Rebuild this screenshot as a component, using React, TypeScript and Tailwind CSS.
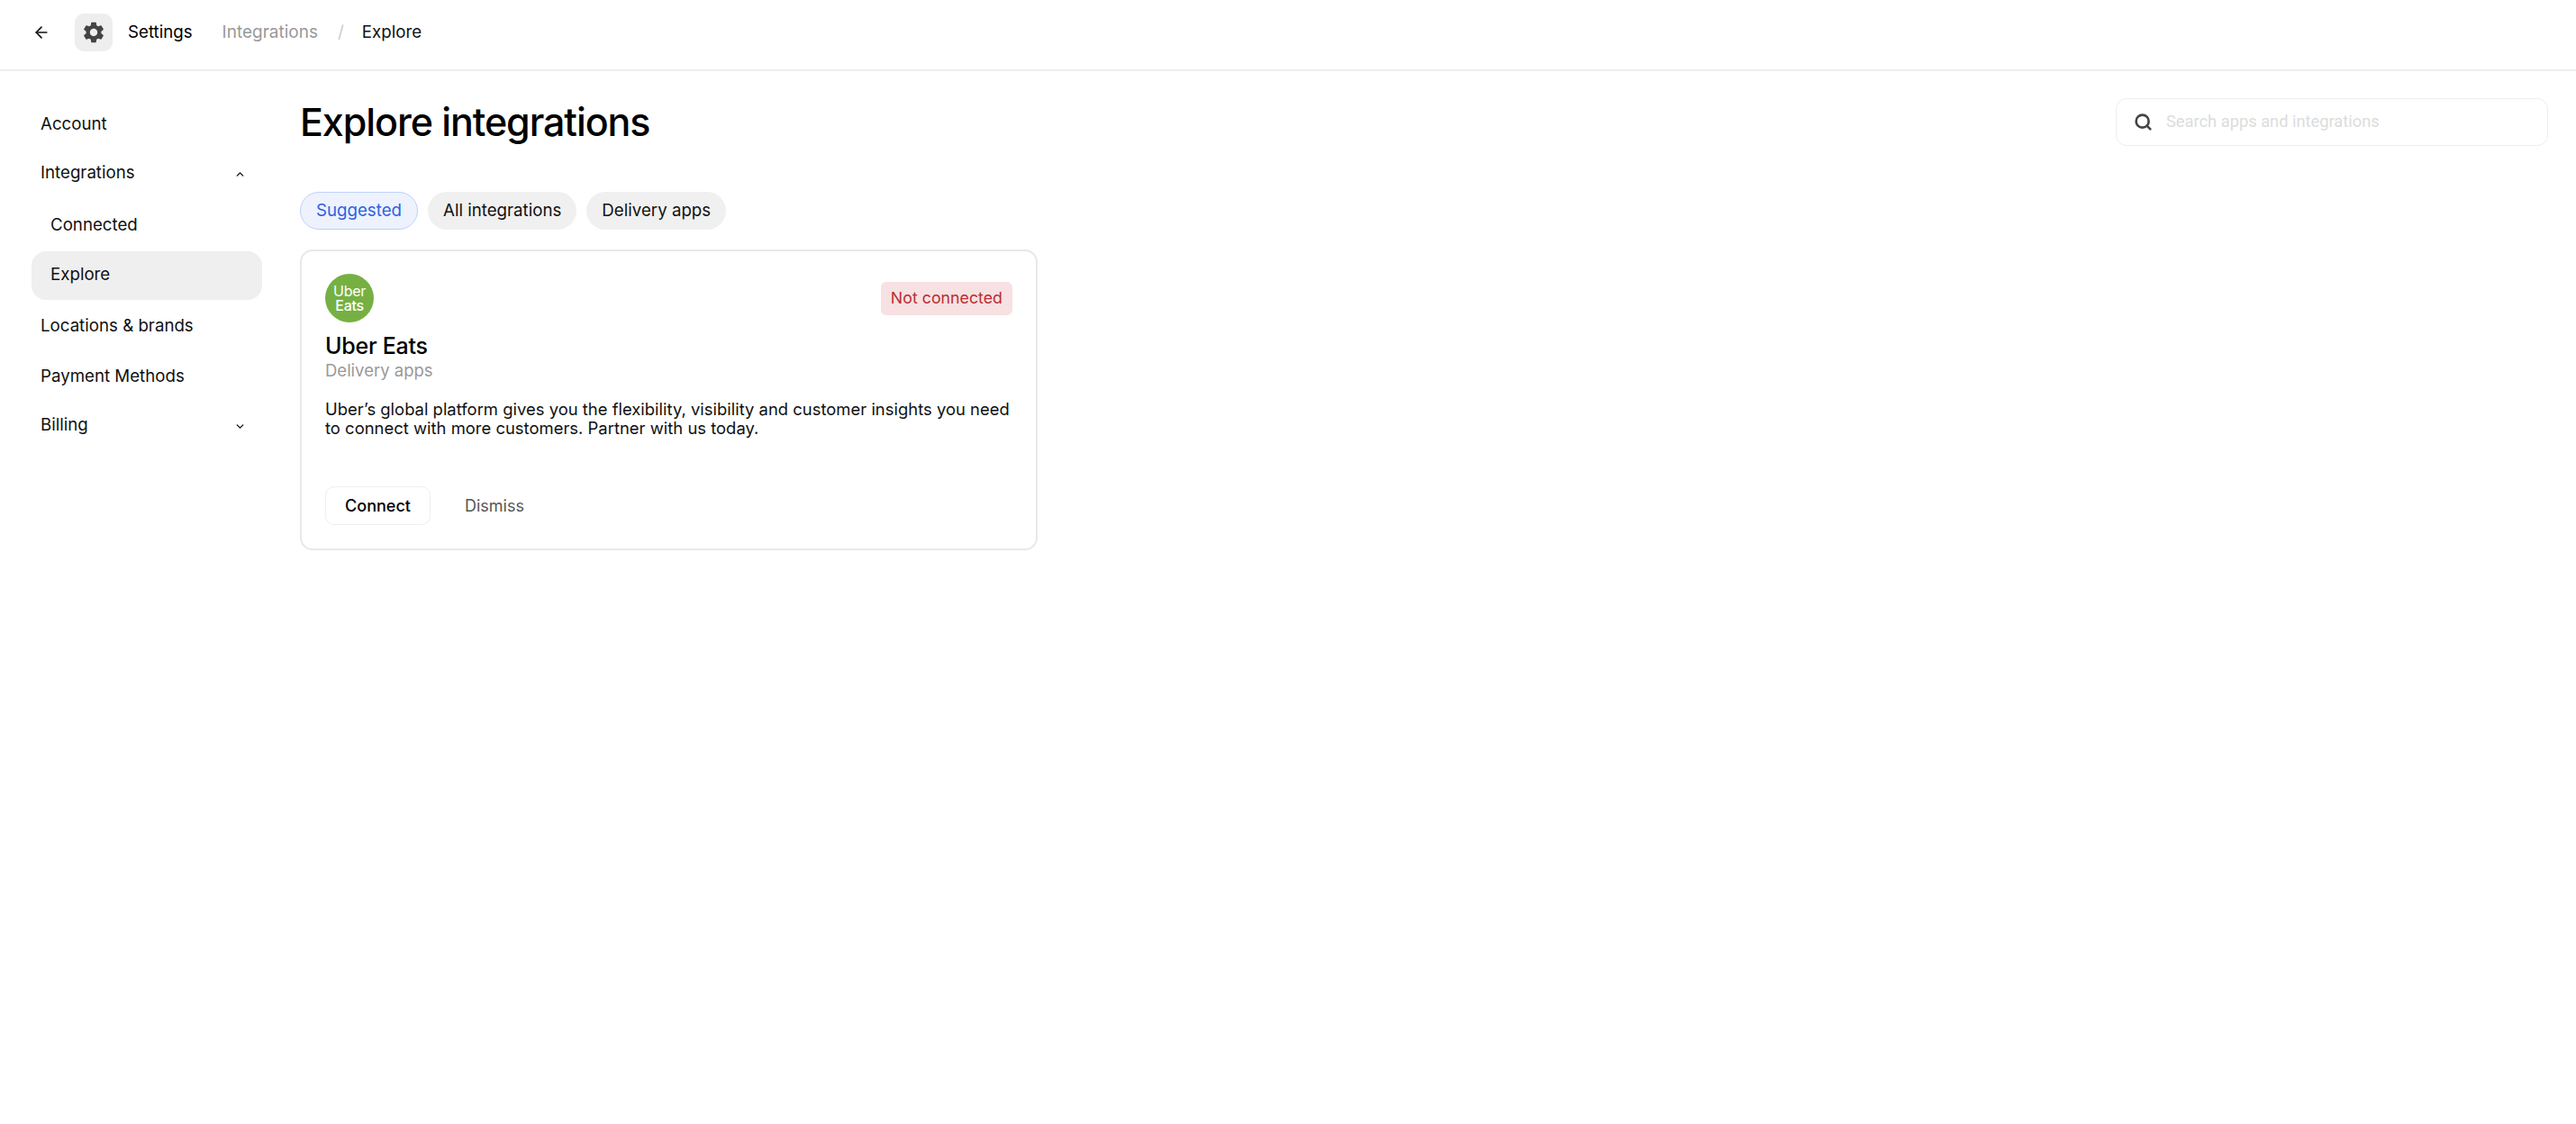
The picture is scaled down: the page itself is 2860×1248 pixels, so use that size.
import { ArrowLeft, ChevronDown, ChevronUp, Search } from 'lucide-react';
import { MdSettings } from 'react-icons/md';

const font = { fontFamily: 'Inter, sans-serif' };

const App = () => {
  return (
    <div className="min-h-[1248px] bg-white text-black" style={font}>
      {/* Top bar */}
      <header className="h-[79px] border-b-2 border-[#eeeeee] flex items-center pl-[36px] pb-[6px]">
        <ArrowLeft size={20} strokeWidth={2} className="text-[#111]" />
        <div className="ml-[27px] w-[42px] h-[42px] rounded-[10px] bg-[#eeeeee] flex items-center justify-center">
          <MdSettings size={28} className="text-[#444]" />
        </div>
        <span className="ml-[17px] pt-[1px] text-[18.7px]">Settings</span>
        <span className="ml-[33px] pt-[1px] text-[19px] text-[#999]">Integrations</span>
        <span className="ml-[22px] pt-[1px] text-[19px] text-[#ccc]">/</span>
        <span className="ml-[20px] pt-[1px] text-[18.7px] text-[#111]">Explore</span>
      </header>

      <div className="flex">
        {/* Sidebar */}
        <aside className="w-[333px] shrink-0 pl-[35px] pt-[42px]">
          <div className="w-[256px] text-[18.7px] text-[#111]">
            <div className="h-[34px] pl-[10px] flex items-center">Account</div>
            <div className="mt-[20px] h-[34px] pl-[10px] pr-[18px] flex items-center justify-between">
              <span>Integrations</span>
              <ChevronUp size={13} strokeWidth={2.5} className="mt-[3px]" />
            </div>
            <div className="mt-[24px] h-[34px] pl-[21px] flex items-center">Connected</div>
            <div className="mt-[12px] h-[54px] rounded-[16px] bg-[#efefef] pl-[21px] pb-[1px] flex items-center">Explore</div>
            <div className="mt-[1px] h-[56px] pl-[10px] flex items-center">Locations &amp; brands</div>
            <div className="h-[56px] pl-[10px] flex items-center">Payment Methods</div>
            <div className="h-[52px] pl-[10px] pr-[18px] flex items-center justify-between">
              <span>Billing</span>
              <ChevronDown size={13} strokeWidth={2.5} className="mt-[3px]" />
            </div>
          </div>
        </aside>

        {/* Main */}
        <main className="flex-1 pr-[31px]">
          <div className="flex items-start justify-between pt-[26px]">
            <h1 className="text-[43px] leading-[60px] font-medium tracking-[-0.025em] text-black">Explore integrations</h1>
            <div className="mt-[4px] w-[480px] h-[53px] rounded-[12px] border border-[#eeeeee] flex items-center pl-[19px]">
              <Search size={21} strokeWidth={3} className="text-[#444]" />
              <span className="ml-[15px] pb-[1px] text-[18.3px] text-[#dcdcdc]" style={{ fontFamily: 'Roboto, sans-serif' }}>Search apps and integrations</span>
            </div>
          </div>

          {/* Filter chips */}
          <div className="mt-[48px] flex gap-[11px] text-[18.7px]">
            <div className="h-[42px] px-[17px] rounded-full bg-[#edf2fe] border border-[#bfd2f8] text-[#2f62e0] flex items-center">Suggested</div>
            <div className="h-[42px] px-[17px] rounded-full bg-[#f0f0f0] text-[#111] flex items-center">All integrations</div>
            <div className="h-[42px] px-[17px] rounded-full bg-[#f0f0f0] text-[#111] flex items-center">Delivery apps</div>
          </div>

          {/* Card */}
          <div className="mt-[22px] w-[819px] h-[334px] rounded-[14px] border-2 border-[#e8e8e8] pt-[25px] px-[26px]">
            <div className="flex items-center justify-between">
              <div className="w-[54px] h-[54px] rounded-full bg-[#76b043] flex flex-col items-center justify-center text-white text-[16px] leading-[16px] tracking-[-0.02em]">
                <span>Uber</span>
                <span className="font-medium">Eats</span>
              </div>
              <div className="h-[37px] px-[11px] rounded-[6px] bg-[#f7e1e2] text-[#b92f34] text-[17.8px] flex items-center">Not connected</div>
            </div>
            <div className="mt-[10px] text-[25px] leading-[32px] font-medium tracking-[-0.01em]">Uber Eats</div>
            <div className="text-[18.5px] leading-[23px] text-[#999]">Delivery apps</div>
            <p className="mt-[21px] text-[18.45px] leading-[21px] text-[#111]">
              Uber’s global platform gives you the flexibility, visibility and customer insights you need to connect with more customers. Partner with us today.
            </p>
            <div className="mt-[54px] flex items-center">
              <div className="h-[43px] w-[117px] rounded-[10px] border border-[#eeeeee] flex items-center justify-center text-[18px] font-medium">Connect</div>
              <div className="ml-[38px] text-[18px] text-[#555]">Dismiss</div>
            </div>
          </div>
        </main>
      </div>
    </div>
  );
};

export default App;
